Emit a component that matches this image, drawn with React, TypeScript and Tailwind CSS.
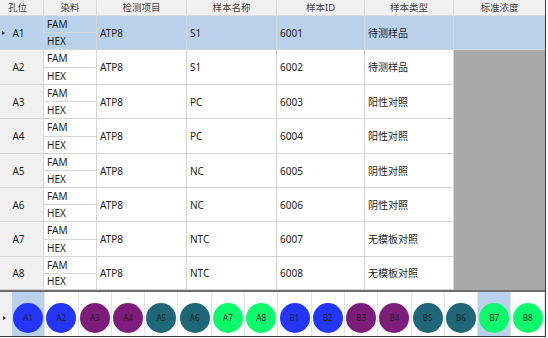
import React from "react";

const rows = [
  { id: "A1", name: "S1", sid: "6001", type: "待测样品", h: "h-[34px]" },
  { id: "A2", name: "S1", sid: "6002", type: "待测样品", h: "h-[35px]" },
  { id: "A3", name: "PC", sid: "6003", type: "阳性对照", h: "h-[34px]" },
  { id: "A4", name: "PC", sid: "6004", type: "阳性对照", h: "h-[35px]" },
  { id: "A5", name: "NC", sid: "6005", type: "阴性对照", h: "h-[34px]" },
  { id: "A6", name: "NC", sid: "6006", type: "阴性对照", h: "h-[34px]" },
  { id: "A7", name: "NTC", sid: "6007", type: "无模板对照", h: "h-[35px]" },
  { id: "A8", name: "NTC", sid: "6008", type: "无模板对照", h: "h-[33px]" },
];

const wells = [
  { l: "A1", c: "bg-[#2236ff]" },
  { l: "A2", c: "bg-[#2236ff]" },
  { l: "A3", c: "bg-[#7d1c7b]" },
  { l: "A4", c: "bg-[#7d1c7b]" },
  { l: "A5", c: "bg-[#1d6778]" },
  { l: "A6", c: "bg-[#1d6778]" },
  { l: "A7", c: "bg-[#0cfb6c]" },
  { l: "A8", c: "bg-[#0cfb6c]" },
  { l: "B1", c: "bg-[#2236ff]" },
  { l: "B2", c: "bg-[#2236ff]" },
  { l: "B3", c: "bg-[#7d1c7b]" },
  { l: "B4", c: "bg-[#7d1c7b]" },
  { l: "B5", c: "bg-[#1d6778]" },
  { l: "B6", c: "bg-[#1d6778]" },
  { l: "B7", c: "bg-[#0cfb6c]" },
  { l: "B8", c: "bg-[#0cfb6c]" },
];

const headers = [
  { t: "孔位", w: "w-[44px]", extra: "pr-[8px]" },
  { t: "染料", w: "w-[53px]", extra: "" },
  { t: "检测项目", w: "w-[90px]", extra: "" },
  { t: "样本名称", w: "w-[90px]", extra: "" },
  { t: "样本ID", w: "w-[88px]", extra: "" },
  { t: "样本类型", w: "w-[89px]", extra: "" },
  { t: "标准浓度", w: "w-[91px]", extra: "" },
];

export default function App() {
  return (
    <div
      className="w-[548px] h-[338px] bg-white overflow-hidden"
      style={{ fontFamily: '"Noto Sans", "Noto Sans CJK SC", sans-serif' }}
    >
      <div className="w-[546px] h-[337px] border-r border-b border-[#3c3c3c] flex flex-col">
        {/* header */}
        <div className="flex h-[16px] bg-[#f0f0f0] border-b border-[#dcdcdc]">
          {headers.map((h, i) => (
            <div
              key={h.t}
              className={`${h.w} ${h.extra} h-full flex items-center justify-center text-[9.5px] leading-none text-[#444] ${
                i < 6 ? "border-r border-[#d9d9d9]" : ""
              }`}
            >
              {h.t}
            </div>
          ))}
        </div>
        {/* rows */}
        {rows.map((r, i) => {
          const sel = i === 0;
          const bg = sel ? "bg-[#b9d1ea]" : "bg-white";
          return (
            <div key={r.id} className={`relative flex ${r.h} text-[10px] text-[#1e1e1e] leading-none`}>
              {sel && (
                <div className="absolute left-[2px] top-[15px] w-0 h-0 border-y-[2.5px] border-y-transparent border-l-[3px] border-l-[#333]" />
              )}
              <div
                className={`w-[44px] h-full flex items-center justify-center pr-[6px] border-r border-b border-[#d6d6d6] ${
                  sel ? "bg-[#b9d1ea]" : "bg-[#f0f0f0]"
                }`}
              >
                {r.id}
              </div>
              <div className={`w-[53px] h-full flex flex-col border-r border-b border-[#d6d6d6] ${bg}`}>
                <div className="flex-1 flex items-center pl-[3px] border-b border-[#d6d6d6]">FAM</div>
                <div className="flex-1 flex items-center pl-[3px]">HEX</div>
              </div>
              <div className={`w-[90px] h-full flex items-center pl-[3px] border-r border-b border-[#d6d6d6] ${bg}`}>
                ATP8
              </div>
              <div className={`w-[90px] h-full flex items-center pl-[3px] border-r border-b border-[#d6d6d6] ${bg}`}>
                {r.name}
              </div>
              <div className={`w-[88px] h-full flex items-center pl-[3px] border-r border-b border-[#d6d6d6] ${bg}`}>
                {r.sid}
              </div>
              <div className={`w-[89px] h-full flex items-center pl-[3px] border-r border-b border-[#d6d6d6] ${bg}`}>
                {r.type}
              </div>
              <div
                className={`w-[91px] h-full ${
                  sel ? "bg-[#b9d1ea] border-b border-[#d6d6d6]" : "bg-[#a9a9a9]"
                }`}
              />
            </div>
          );
        })}
        {/* separator */}
        <div className="h-[2px] bg-[#6e6e6e]" />
        {/* plate strip */}
        <div className="flex flex-1 bg-white">
          <div className="relative w-[12px] h-full bg-[#f0f0f0]">
            <div className="absolute left-[3px] top-[24px] w-0 h-0 border-y-[2.5px] border-y-transparent border-l-[3px] border-l-[#333]" />
          </div>
          {wells.map((w) => {
            const sel = w.l === "A1" || w.l === "B7";
            return (
              <div
                key={w.l}
                className={`w-[33.3px] shrink-0 h-full flex justify-center pt-[11px] border-r border-[#e4e4e4] ${
                  sel ? "bg-[#b9d1ea]" : "bg-white"
                }`}
              >
                <div
                  className={`w-[30px] h-[30px] rounded-full ${w.c} flex items-center justify-center text-[8px] text-[#222]`}
                >
                  {w.l}
                </div>
              </div>
            );
          })}
        </div>
      </div>
    </div>
  );
}
